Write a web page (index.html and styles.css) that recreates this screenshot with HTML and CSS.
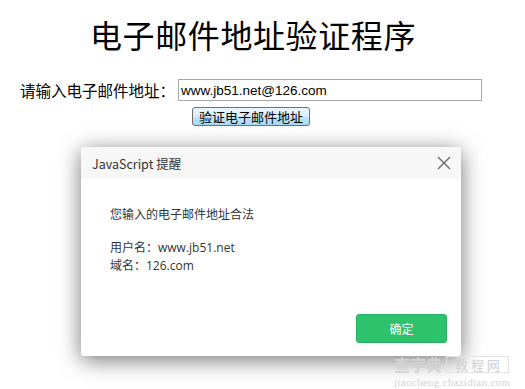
FILE: index.html
```html
<!DOCTYPE html>
<html lang="zh">
<head>
<meta charset="utf-8">
<title>电子邮件地址验证程序</title>
<link rel="stylesheet" href="styles.css">
</head>
<body>
<div class="page">
  <h1 class="title">电子邮件地址验证程序</h1>
  <div class="form-row">
    <label class="label">请输入电子邮件地址：</label>
    <input class="email" type="text" value="www.jb51.net@126.com">
  </div>
  <div class="btn-row">
    <button class="verify">验证电子邮件地址</button>
  </div>
</div>

<div class="dialog">
  <div class="dialog-head">
    <span class="dialog-title">JavaScript 提醒</span>
    <svg class="close" width="14" height="14" viewBox="0 0 14 14"><path d="M1 1L13 13M13 1L1 13" stroke="#666" stroke-width="1.3" fill="none"/></svg>
  </div>
  <div class="dialog-body">
    <p class="msg">您输入的电子邮件地址合法</p>
    <p class="msg2">用户名：www.jb51.net<br>域名：126.com</p>
  </div>
  <div class="dialog-foot">
    <button class="ok">确定</button>
  </div>
</div>

<div class="watermark">
  <div class="wm-top"><span class="wm-big">查字典</span><span class="wm-box">教 程 网</span></div>
  <div class="wm-url">jiaocheng.chazidian.com</div>
</div>
</body>
</html>
```

FILE: styles.css
```css
html, body {
  margin: 0;
  padding: 0;
  background: #fff;
}
body {
  width: 525px;
  height: 389px;
  overflow: hidden;
  position: relative;
  font-family: "Liberation Sans", "Noto Sans CJK SC", sans-serif;
}
.page {
  padding-top: 14px;
}
.title {
  margin: 0 0 0 90px;
  font-family: "Noto Sans CJK SC", serif;
  font-weight: 400;
  font-size: 32px;
  line-height: 40px;
  letter-spacing: 0.6px;
  color: #000;
}
.form-row {
  display: flex;
  align-items: center;
  margin-top: 25px;
  padding-left: 20px;
  gap: 3px;
}
.label {
  font-family: "Noto Sans CJK SC", sans-serif;
  font-size: 15.5px;
  color: #000;
  line-height: 20px;
}
.email {
  box-sizing: border-box;
  width: 304px;
  height: 22px;
  border: 1px solid #a9a9a9;
  padding: 0 2px;
  font-family: "Liberation Sans", sans-serif;
  font-size: 13.5px;
  color: #000;
  outline: none;
}
.btn-row {
  padding-left: 192px;
  margin-top: 6px;
}
.verify {
  box-sizing: border-box;
  width: 118px;
  height: 19px;
  padding: 0;
  border: 1px solid #707070;
  border-radius: 3px;
  background: linear-gradient(#eaf6fd 0%, #d9f0fc 50%, #bee6fd 51%, #a7d9f5 100%);
  font-family: "Noto Sans CJK SC", sans-serif;
  font-size: 13px;
  line-height: 17px;
  color: #000;
}
.dialog {
  position: absolute;
  left: 81px;
  top: 147px;
  width: 380px;
  height: 209px;
  background: #fff;
  border-radius: 3px;
  box-shadow: 0 4px 22px rgba(0,0,0,0.55);
  display: flex;
  flex-direction: column;
  overflow: hidden;
}
.dialog-head {
  height: 32px;
  background: #f7f7f7;
  display: flex;
  align-items: center;
  justify-content: space-between;
  padding: 0 10px 0 11px;
}
.dialog-title {
  font-family: "Noto Sans CJK SC", sans-serif;
  font-size: 12.5px;
  color: #333;
}
.close {
  display: block;
}
.dialog-body {
  padding: 27px 0 0 29px;
  flex: 1;
  font-family: "Open Sans", "Noto Sans CJK SC", sans-serif;
  font-size: 12px;
  color: #333;
}
.msg {
  margin: 0;
  line-height: 18px;
}
.msg2 {
  margin: 15px 0 0;
  line-height: 18px;
}
.dialog-foot {
  display: flex;
  justify-content: flex-end;
  padding: 0 14px 13px 0;
}
.ok {
  width: 91px;
  height: 29px;
  border: 1px solid #27b05d;
  border-radius: 3px;
  background: #2dc26b;
  color: #fff;
  font-family: "Noto Sans CJK SC", sans-serif;
  font-size: 12px;
  padding: 0;
}
.watermark {
  position: absolute;
  left: 394px;
  top: 355px;
  color: #d6d6d6;
  font-family: "Noto Sans CJK SC", sans-serif;
}
.wm-top {
  display: flex;
  align-items: center;
  gap: 4px;
  height: 19px;
}
.wm-big {
  font-size: 16px;
  line-height: 19px;
  font-weight: 700;
  color: #d2d2d2;
}
.wm-box {
  font-size: 13px;
  border: 1px solid #e2e2e2;
  padding: 0 8px;
  color: #d0d0d0;
  line-height: 15px;
}
.wm-url {
  margin-top: 2px;
  font-family: "Liberation Serif", serif;
  font-size: 11px;
  line-height: 12px;
  color: #d4d4d4;
  letter-spacing: 0.3px;
}
```
